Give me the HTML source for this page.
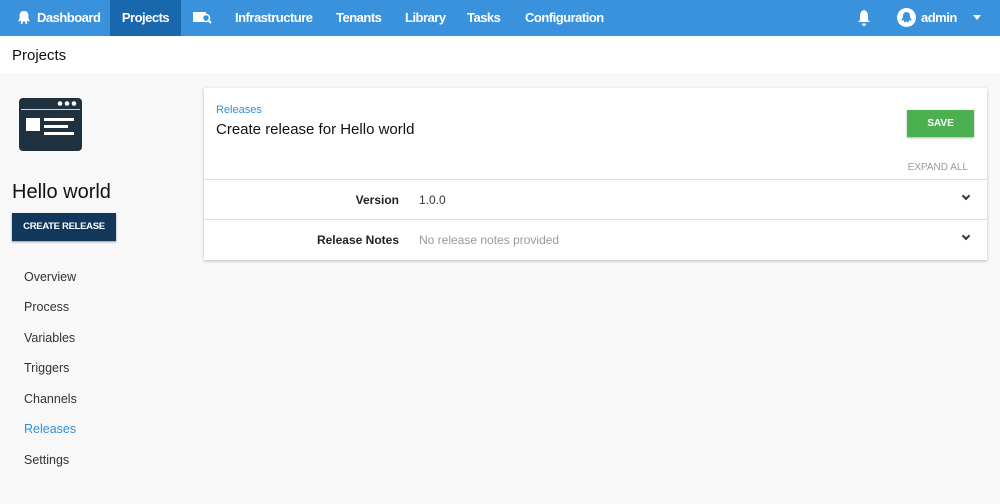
<!DOCTYPE html>
<html><head><style>
*{margin:0;padding:0;box-sizing:border-box}
body{width:1000px;height:504px;background:#f8f8f8;font-family:"Liberation Sans",sans-serif;overflow:hidden;position:relative}
.nav{height:36px;background:#3b92dc;color:#fff;position:relative}
.nav span{position:absolute;top:0;height:36px;line-height:36px;font-size:13px;font-weight:bold;letter-spacing:-0.5px}
.act{background:#1967ad;}
.hdr{height:37px;background:#fff;font-size:15px;color:#111;padding:11px 12px}
.card{position:absolute;left:204px;top:88px;width:783px;height:172px;background:#fff;box-shadow:0 1px 3px rgba(0,0,0,.25)}
.side a{position:absolute;left:24px;font-size:12.5px;color:#333}
.row{position:absolute;left:0;width:783px;border-top:1px solid #ddd;height:40px;font-size:12px}
.chev{position:absolute;right:18px;top:13px;width:6px;height:6px;border-right:2px solid #333;border-bottom:2px solid #333;transform:rotate(45deg)}
</style></head><body>
<div class="nav">
<span style="left:18px;width:8px"><svg width="12" height="14" viewBox="0 0 12 14" style="margin-top:11px"><path d="M6 0C9 0 10.5 2 10.5 5 10.5 7 10 8 12 10 10 11 9 9 9 9 9 11 10 13 8 13 7 12 7 10 6 10 5 10 5 12 4 13 2 13 3 11 3 9 3 9 2 11 0 10 2 8 1.5 7 1.5 5 1.5 2 3 0 6 0Z" fill="#fff"/></svg></span>
<span style="left:37px">Dashboard</span>
<span class="act" style="left:110px;width:71px;text-align:center">Projects</span>
<span style="left:193px"><svg width="19" height="13" viewBox="0 0 19 13" style="margin-top:11px"><rect x="0" y="1" width="13" height="10" fill="#fff"/><circle cx="13" cy="7" r="3.5" fill="#3b92dc" stroke="#fff" stroke-width="1.5"/><path d="M15.5 9.5L18 12" stroke="#fff" stroke-width="2"/></svg></span>
<span style="left:235px">Infrastructure</span>
<span style="left:336px">Tenants</span>
<span style="left:405px">Library</span>
<span style="left:467px">Tasks</span>
<span style="left:525px">Configuration</span>
<span style="left:857px"><svg width="14" height="16" viewBox="0 0 14 16" style="margin-top:10px"><path d="M7 0C4 1 3 3 3 6V10L1 12H13L11 10V6C11 3 10 1 7 0Z M5 13.5H9C9 15 8 16 7 16 6 16 5 15 5 13.5Z" fill="#fff"/></svg></span>
<span style="left:897px"><svg width="19" height="19" viewBox="0 0 19 19" style="margin-top:8px"><circle cx="9.5" cy="9.5" r="9.5" fill="#fff"/><path d="M9.5 4C12 4 13 6 13 8 13 10 14 11 15 12 13 13 12 12 12 12 12 14 11 15 10 14 9.5 13 9 13 8.5 14 7 15 7 14 7 12 7 12 6 13 4 12 5 11 6 10 6 8 6 6 7 4 9.5 4Z" fill="#3b92dc"/></svg></span>
<span style="left:921px">admin</span>
<span style="left:973px;top:15px;height:0;width:0;border-left:4px solid transparent;border-right:4px solid transparent;border-top:5px solid #fff"></span>
</div>
<div class="hdr">Projects</div>
<svg width="63" height="53" viewBox="0 0 63 53" style="position:absolute;left:19px;top:98px"><rect x="0" y="0" width="63" height="53" rx="4" fill="#1f303f"/><rect x="2" y="11" width="59" height="0.8" fill="#fff"/><circle cx="41" cy="5.5" r="2.3" fill="#fff"/><circle cx="48" cy="5.5" r="2.3" fill="#fff"/><circle cx="55" cy="5.5" r="2.3" fill="#fff"/><rect x="7" y="20" width="14" height="13" fill="#fff"/><rect x="25" y="20" width="30" height="3" fill="#fff"/><rect x="25" y="27" width="24" height="3" fill="#fff"/><rect x="25" y="34" width="30" height="3" fill="#fff"/></svg>
<div style="position:absolute;left:12px;top:181px;font-size:20px;color:#111">Hello world</div>
<div style="position:absolute;left:12px;top:213px;width:104px;height:28px;background:#11375a;color:#fff;font-size:9.5px;font-weight:bold;text-align:center;line-height:28px;letter-spacing:-0.3px;box-shadow:0 1px 2px rgba(0,0,0,.4)">CREATE RELEASE</div>
<div class="side">
<a style="top:270px">Overview</a><a style="top:300px">Process</a><a style="top:331px">Variables</a><a style="top:361px">Triggers</a><a style="top:392px">Channels</a><a style="top:422px;color:#2f8fdc">Releases</a><a style="top:453px">Settings</a>
</div>
<div class="card">
<div style="position:absolute;left:12px;top:16px;font-size:11px;color:#2f8fdc">Releases</div>
<div style="position:absolute;left:12px;top:33px;font-size:15px;color:#111">Create release for Hello world</div>
<div style="position:absolute;left:703px;top:22px;width:67px;height:27px;background:#4bb04f;color:#fff;font-size:10px;font-weight:bold;text-align:center;line-height:27px;box-shadow:0 1px 2px rgba(0,0,0,.3)">SAVE</div>
<div style="position:absolute;right:19px;top:74px;font-size:10px;color:#999">EXPAND ALL</div>
<div class="row" style="top:91px"><span style="position:absolute;right:588px;top:13px;font-weight:bold;color:#222">Version</span><span style="position:absolute;left:215px;top:13px;color:#333">1.0.0</span><i class="chev"></i></div>
<div class="row" style="top:131px"><span style="position:absolute;right:588px;top:13px;font-weight:bold;color:#222">Release Notes</span><span style="position:absolute;left:215px;top:13px;color:#999">No release notes provided</span><i class="chev"></i></div>
</div>
</body></html>
